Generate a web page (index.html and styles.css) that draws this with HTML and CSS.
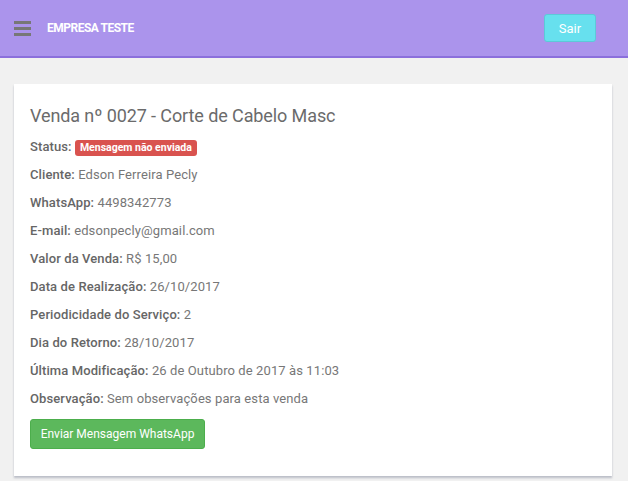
FILE: index.html
```html
<!DOCTYPE html>
<html lang="pt-BR">
<head>
<meta charset="utf-8">
<title>Venda</title>
<link rel="stylesheet" href="styles.css">
</head>
<body>
<header class="topbar">
  <div class="brand">
    <span class="burger"><i></i><i></i><i></i></span>
    <span class="company">EMPRESA TESTE</span>
  </div>
  <button class="btn-exit">Sair</button>
</header>
<main class="content">
  <section class="card">
    <h1 class="title">Venda nº 0027 - Corte de Cabelo Masc</h1>
    <div class="rows">
      <p class="row"><span class="label">Status:</span> <span class="badge">Mensagem não enviada</span></p>
      <p class="row"><span class="label">Cliente:</span> Edson Ferreira Pecly</p>
      <p class="row"><span class="label">WhatsApp:</span> 4498342773</p>
      <p class="row"><span class="label">E-mail:</span> edsonpecly@gmail.com</p>
      <p class="row"><span class="label">Valor da Venda:</span> R$ 15,00</p>
      <p class="row"><span class="label">Data de Realização:</span> 26/10/2017</p>
      <p class="row"><span class="label">Periodicidade do Serviço:</span> 2</p>
      <p class="row"><span class="label">Dia do Retorno:</span> 28/10/2017</p>
      <p class="row"><span class="label">Última Modificação:</span> 26 de Outubro de 2017 às 11:03</p>
      <p class="row"><span class="label">Observação:</span> Sem observações para esta venda</p>
    </div>
    <button class="btn-whats">Enviar Mensagem WhatsApp</button>
  </section>
</main>
</body>
</html>
```
FILE: styles.css
```css
* { box-sizing: border-box; }
html, body { margin: 0; padding: 0; }
body {
  background: #f1f1f1;
  font-family: Roboto, "Noto Sans", sans-serif;
  color: #777;
  height: 481px;
  overflow: hidden;
}
.topbar {
  height: 58px;
  background: #ab94ec;
  border-bottom: 2px solid #8b6fdc;
  display: flex;
  align-items: center;
  justify-content: space-between;
  padding: 0 32px 0 14px;
}
.brand { display: flex; align-items: center; gap: 16px; }
.burger { display: flex; flex-direction: column; gap: 3px; width: 17px; }
.burger i { display: block; height: 3px; background: #777; }
.company {
  color: #fff;
  font-weight: 700;
  font-size: 12px;
  letter-spacing: -0.5px;
}
.btn-exit {
  width: 52px;
  height: 28px;
  background: #67e0ee;
  border: 1px solid #5cc9d8;
  border-radius: 3px;
  color: #fff;
  font-family: inherit;
  font-size: 13px;
  padding: 0;
}
.content { padding: 26px 16px 0 14px; }
.card {
  background: #fff;
  height: 392px;
  padding: 20px 16px 0 16px;
  box-shadow: 0 2px 2px rgba(60, 70, 100, 0.3);
}
.title {
  margin: 0 0 6px 0;
  font-size: 18px;
  line-height: 23px;
  font-weight: 400;
  letter-spacing: -0.1px;
  color: #6b6b6b;
}
.rows { display: flex; flex-direction: column; }
.row {
  margin: 0;
  height: 28px;
  line-height: 28px;
  font-size: 13px;
  letter-spacing: 0.1px;
  color: #777;
}
.label { font-weight: 500; color: #666; }
.badge {
  display: inline-block;
  background: #d9534f;
  color: #fff;
  font-weight: 700;
  font-size: 10.5px;
  line-height: 16px;
  letter-spacing: 0;
  padding: 0 5px;
  border-radius: 3px;
}
.btn-whats {
  margin-top: 6px;
  height: 30px;
  width: 175px;
  background: #5cb85c;
  border: 1px solid #4cae4c;
  border-radius: 3px;
  color: #fff;
  font-family: inherit;
  font-size: 12px;
  padding: 0;
}
```
